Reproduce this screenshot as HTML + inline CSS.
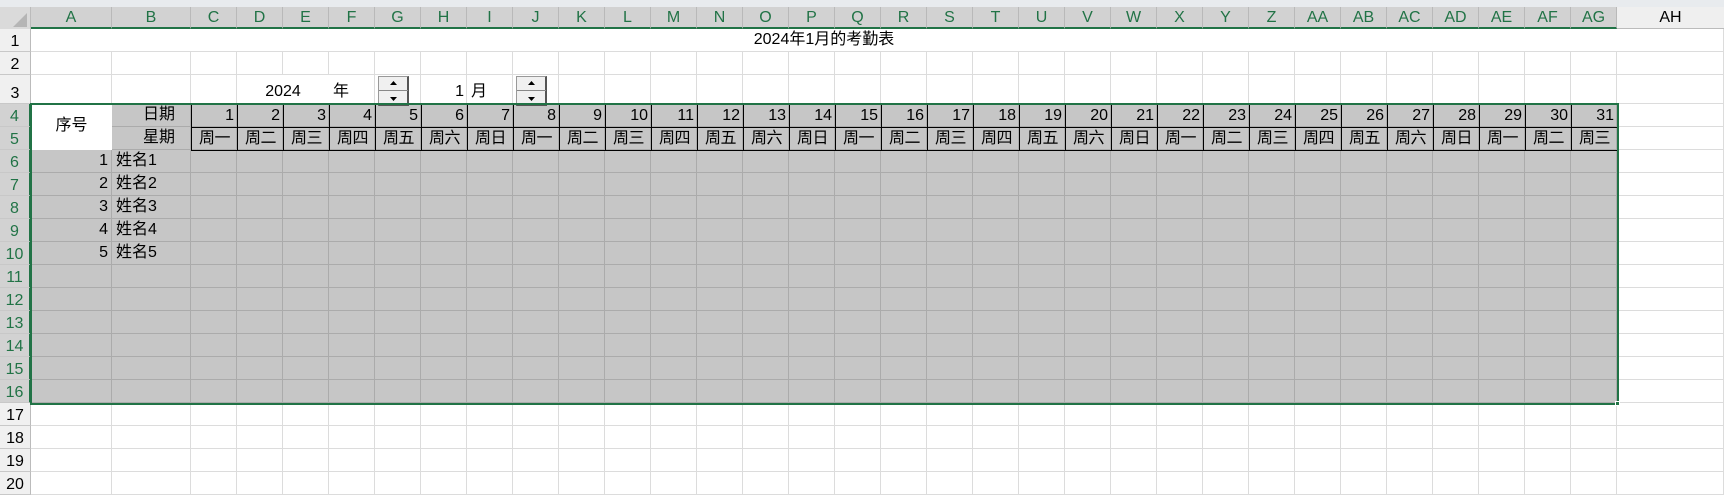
<!DOCTYPE html>
<html><head><meta charset="utf-8"><style>
body{margin:0;width:1724px;height:482px;overflow:hidden;background:#fff;position:relative;font-family:"Liberation Sans","Noto Sans CJK SC",sans-serif;font-size:16px;}
.a{position:absolute;box-sizing:border-box;white-space:nowrap;line-height:1;}
</style></head><body>
<div id="r"></div>
<script>
var R=document.getElementById('r'),h='';
function d(x,y,w,hh,st,t){h+='<div class="a" style="left:'+x+'px;top:'+y+'px;width:'+w+'px;height:'+hh+'px;'+(st||'')+'">'+(t||'')+'</div>';}
var cols=[[31,112,'A'],[112,191,'B']];
var names=['C','D','E','F','G','H','I','J','K','L','M','N','O','P','Q','R','S','T','U','V','W','X','Y','Z','AA','AB','AC','AD','AE','AF','AG'];
for(var i=0;i<31;i++)cols.push([191+46*i,237+46*i,names[i]]);
var rows=[[29,52],[52,75],[75,104]];
for(var r=4;r<=20;r++)rows.push([104+23*(r-4),127+23*(r-4)]);
d(0,0,1724,7,'background:#e8ebee');
d(0,7,31,22,'background:#dadada;border-right:1px solid #bbb');
h+='<svg class="a" style="left:12px;top:12px" width="16" height="16"><polygon points="15,1 15,15 1,15" fill="#b5b5b5"/></svg>';
cols.forEach(function(c){d(c[0],7,c[1]-c[0],22,'background:#d2d2d2;border-right:1px solid #b9b9b9;border-bottom:2px solid #217346;color:#217346;text-align:center;padding-top:3px;font-size:16px',c[2]);});
d(1617,7,107,22,'background:#efefef;border-bottom:1px solid #bbb;text-align:center;padding-top:3px;color:#000','AH');
rows.forEach(function(rr,ri){
 var rn=ri+1,sel=rn>=4&&rn<=16;
 d(0,rr[0],31,rr[1]-rr[0],'background:'+(sel?'#d2d2d2':'#f0f0f0')+';border-bottom:1px solid #c8c8c8;border-right:'+(sel?'2px solid #217346':'1px solid #bbb')+';color:'+(sel?'#217346':'#000')+';text-align:center;padding-top:'+(rr[1]-rr[0]-18)+'px',rn);
 cols.concat([[1617,1724]]).forEach(function(c){
  var s=sel&&c[0]<1617;
  d(c[0],rr[0],c[1]-c[0],rr[1]-rr[0],'background:'+(s?'#c6c6c6':'#fff')+';border-right:1px solid '+(s?'#ababab':'#dcdcdc')+';border-bottom:1px solid '+(s?'#ababab':'#dcdcdc'));
 });
});
d(31,29,1586,23,'background:#fff;border-bottom:1px solid #dcdcdc;text-align:center;padding-top:3px','2024年1月的考勤表');
d(31,104,81,46,'background:#fff;text-align:center;padding-top:14px','序号');
d(112,104,79,23,'text-align:right;padding:3px 16px 0 0','日期');
d(112,127,79,23,'text-align:right;padding:3px 16px 0 0','星期');
var wk=['周一','周二','周三','周四','周五','周六','周日'];
for(var i=0;i<31;i++){
 var x=191+46*i;
 d(x,104,47,24,'border:1.5px solid #000;text-align:right;padding:3px 3px 0 0',i+1);
 d(x,127,47,24,'border:1.5px solid #000;text-align:center;padding-top:3px;letter-spacing:-0.5px',wk[i%7]);
}
for(var k=1;k<=5;k++){var y=150+23*(k-1);
 d(31,y,80,23,'text-align:right;padding:3px 3px 0 0',k);
 d(112,y,79,23,'padding:3px 0 0 4px','姓名'+k);}
d(237,75,92,29,'text-align:center;padding-top:9px;background:#fff','2024');
d(329,75,30,29,'padding:9px 0 0 4px','年');
d(421,75,46,29,'text-align:right;padding:9px 3px 0 0','1');
d(467,75,30,29,'padding:9px 0 0 4px','月');
function spin(x){
 d(x,76,31,30,'background:#f0f0f0;border:1px solid #999;border-right:2px solid #555;border-bottom:2px solid #555');
 d(x+1,90,29,1,'background:#888');
 h+='<svg class="a" style="left:'+(x+11)+'px;top:81px" width="9" height="22"><polygon points="4.5,0 8,4 1,4" fill="#000"/><polygon points="1,16 8,16 4.5,20" fill="#000"/></svg>';
}
spin(378);spin(516);
d(30,103,1589,302,'border:2px solid #217346;background:transparent');
d(1615,401,5,5,'background:#217346;border:1px solid #fff');
R.innerHTML=h;
</script>
</body></html>
